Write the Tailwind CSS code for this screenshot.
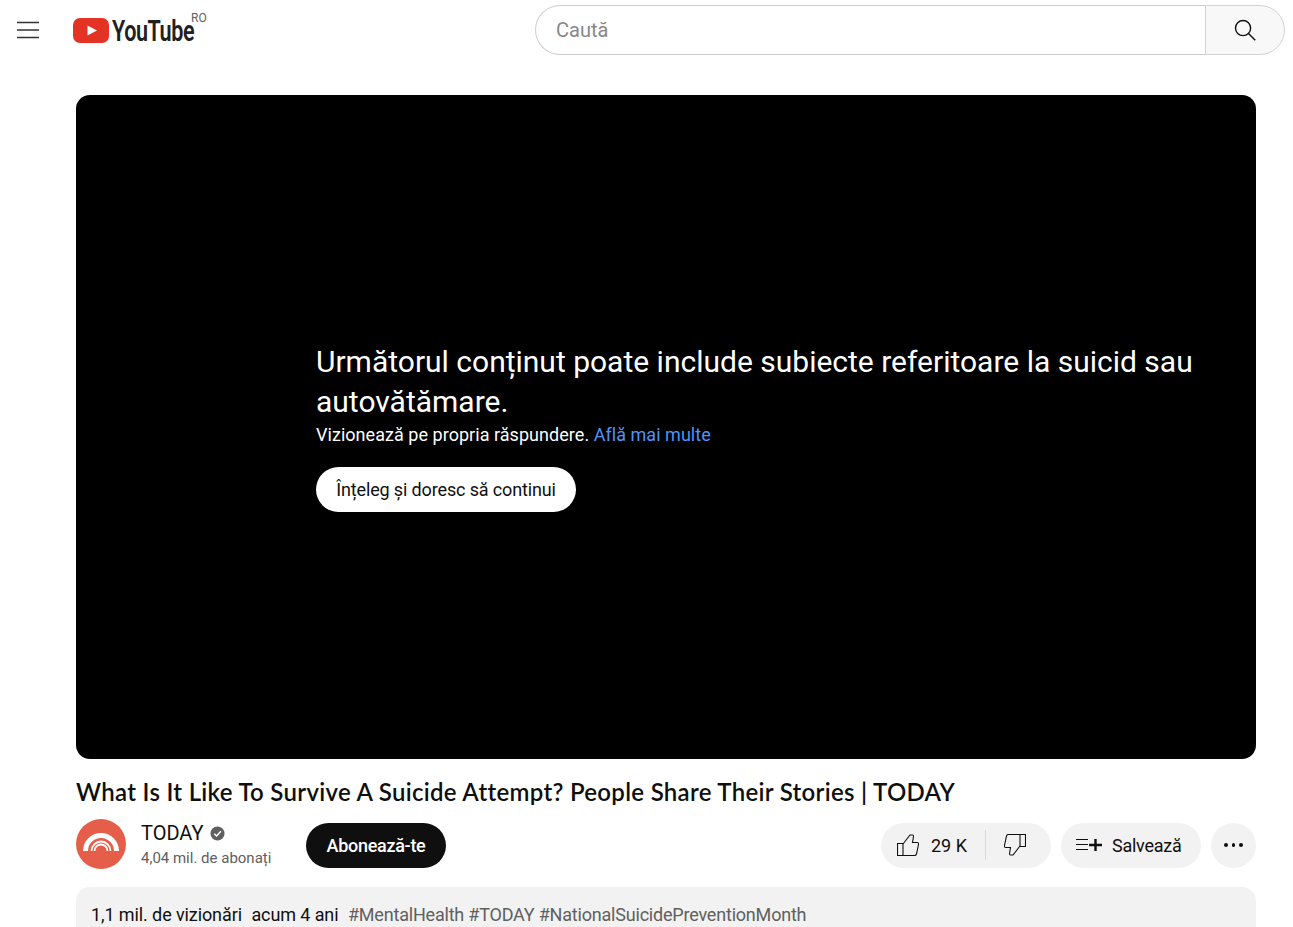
<!DOCTYPE html>
<html lang="ro">

<head>
    <meta charset="UTF-8">
    <meta name="viewport" content="width=device-width, initial-scale=1.0">
    <script src="https://cdn.jsdelivr.net/npm/@tailwindcss/browser@4"></script>
    <title>YouTube</title>
</head>

<body class="bg-white font-['Roboto',sans-serif] text-[#0f0f0f] h-[927px] overflow-hidden">
    <!-- header -->
    <header class="h-[60px] flex items-center">
        <svg class="ml-[17px] shrink-0" width="22" height="18" viewBox="0 0 22 18" fill="none" stroke="#333" stroke-width="1.6">
            <path d="M0 1.5H22M0 9H22M0 16.5H22"/>
        </svg>
        <div class="ml-[34px] w-[134px] h-[60px] flex items-center relative shrink-0">
            <svg class="shrink-0 mt-[1px]" width="36" height="25" viewBox="0 0 36 25">
                <rect width="36" height="25" rx="7" fill="#e43224"/>
                <path d="M14.5 7.5 24 12.5 14.5 17.5Z" fill="#fff"/>
            </svg>
            <span class="ml-[3px] text-[30px] font-semibold tracking-[-0.6px] text-[#212121] origin-left scale-x-[0.72] leading-none shrink-0 mt-[2px]">YouTube</span>
            <span class="absolute left-[118px] top-[11px] text-[12px] leading-[14px] text-[#606060]">RO</span>
        </div>
        <div class="ml-[328px] flex h-[50px] w-[750px]">
            <div class="flex-1 border border-[#ccc] rounded-l-[25px] border-r-0 pl-[20px] flex items-center text-[20px] text-[#888]">Caută</div>
            <button class="w-[80px] border border-[#d3d3d3] rounded-r-[25px] bg-[#f8f8f8] flex items-center justify-center">
                <svg width="26" height="26" viewBox="0 0 24 24" fill="none" stroke="#111" stroke-width="1.3">
                    <circle cx="10.2" cy="10.2" r="7"/>
                    <path d="M15.2 15.2 21.5 21.5"/>
                </svg>
            </button>
        </div>
    </header>

    <main class="mt-[35px] ml-[76px] w-[1180px]">
        <!-- player -->
        <div class="h-[664px] bg-black rounded-[14px] pl-[240px] pt-[247px] text-white">
            <p class="text-[30px] leading-[40px] w-[900px]">Următorul conținut poate include subiecte referitoare la suicid sau autovătămare.</p>
            <p class="text-[18px] leading-[24px] mt-[1px] tracking-[0.04px]">Vizionează pe propria răspundere. <a class="text-[#5094f5]">Află mai multe</a></p>
            <button class="mt-[20px] h-[45px] w-[260px] bg-white rounded-full text-[#0f0f0f] text-[18px] tracking-[-0.14px] flex items-center justify-center">Înțeleg și doresc să continui</button>
        </div>

        <h1 class="mt-[16px] text-[24px] leading-[34px] font-semibold font-['Lato',sans-serif] tracking-[0.3px] whitespace-nowrap">What Is It Like To Survive A Suicide Attempt? People Share Their Stories | TODAY</h1>

        <!-- owner row and actions -->
        <div class="mt-[10px] flex items-center h-[50px]">
            <div class="w-[50px] h-[50px] rounded-full bg-[#e55e4a] shrink-0">
                <svg width="50" height="50" viewBox="0 0 50 50" fill="none" stroke="#fff">
                    <path d="M9.5 32A15.5 15.5 0 0 1 40.5 32" stroke-width="5"/>
                    <path d="M15.5 32A9.5 9.5 0 0 1 34.5 32" stroke-width="1.8"/>
                    <path d="M18.5 32A6.5 6.5 0 0 1 31.5 32" stroke-width="1.8"/>
                    <path d="M7 32H43" stroke-width="1" opacity="0"/>
                </svg>
            </div>
            <div class="ml-[15px] w-[165px]">
                <div class="flex items-center text-[20px] leading-[26px]">TODAY
                    <svg class="ml-[7px]" width="15" height="15" viewBox="0 0 16 16">
                        <circle cx="8" cy="8" r="7.5" fill="#606060"/>
                        <path d="M4.5 8.2 7 10.6 11.6 5.6" fill="none" stroke="#fff" stroke-width="1.6"/>
                    </svg>
                </div>
                <div class="text-[15px] leading-[20px] text-[#606060] mt-[2px]">4,04 mil. de abonați</div>
            </div>
            <button class="h-[45px] w-[140px] mt-[2px] bg-[#0f0f0f] text-white rounded-full text-[18px] font-medium tracking-[-0.3px] flex items-center justify-center">Abonează-te</button>

            <div class="ml-auto flex gap-[10px] mt-[2px]">
                <div class="h-[45px] w-[170px] rounded-full bg-[#f2f2f2] flex items-center">
                    <svg class="ml-[16px]" width="22" height="22" viewBox="0 0 22 22" fill="none" stroke="#0f0f0f" stroke-width="1.1">
                        <path d="M.5 9.5H6V21.5H.5ZM6 10 13 1H15.5Q16.5 1 16.5 2.5L15.5 8.5H20Q22 8.5 21.5 10.5L19.5 20Q19 21.5 17.5 21.5H6"/>
                    </svg>
                    <span class="ml-[12px] text-[18px] w-[54px]">29 K</span>
                    <span class="w-px h-[30px] bg-[#d9d9d9]"></span>
                    <svg class="ml-[18px]" width="22" height="22" viewBox="0 0 22 22" fill="none" stroke="#0f0f0f" stroke-width="1.1">
                        <path transform="rotate(180 11 11)" d="M.5 9.5H6V21.5H.5ZM6 10 13 1H15.5Q16.5 1 16.5 2.5L15.5 8.5H20Q22 8.5 21.5 10.5L19.5 20Q19 21.5 17.5 21.5H6"/>
                    </svg>
                </div>
                <div class="h-[45px] w-[140px] rounded-full bg-[#f2f2f2] flex items-center">
                    <svg class="ml-[15px]" width="26" height="16" viewBox="0 0 26 16" fill="none" stroke="#0f0f0f">
                        <path d="M0 2.5H12M0 7.5H12M0 12.5H12" stroke-width="1"/>
                        <path d="M13 8H26M19.5 2V14" stroke-width="2.4"/>
                    </svg>
                    <span class="ml-[10px] text-[18px] tracking-[-0.25px]">Salvează</span>
                </div>
                <div class="h-[45px] w-[45px] rounded-full bg-[#f2f2f2] flex items-center justify-center gap-[4px]">
                    <span class="w-[3.5px] h-[3.5px] rounded-full bg-[#0f0f0f]"></span>
                    <span class="w-[3.5px] h-[3.5px] rounded-full bg-[#0f0f0f]"></span>
                    <span class="w-[3.5px] h-[3.5px] rounded-full bg-[#0f0f0f]"></span>
                </div>
            </div>
        </div>

        <!-- description -->
        <div class="mt-[18px] h-[40px] bg-[#f2f2f2] rounded-t-[14px] pl-[15px] pt-[15px] text-[18px] leading-[25px] whitespace-nowrap overflow-hidden">
            <span class="mr-[5px] tracking-[-0.1px]">1,1 mil. de vizionări</span>
            <span class="mr-[5px] tracking-[-0.1px]">acum 4 ani</span>
            <span class="text-[#606060] tracking-[-0.2px]">#MentalHealth #TODAY #NationalSuicidePreventionMonth</span>
        </div>
    </main>
</body>

</html>
